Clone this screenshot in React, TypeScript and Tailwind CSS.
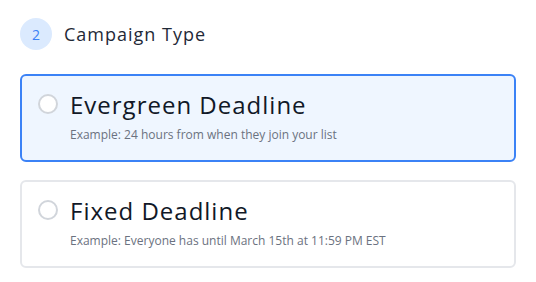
const options = [
  { title: "Evergreen Deadline", hint: "Example: 24 hours from when they join your list", active: true },
  { title: "Fixed Deadline", hint: "Example: Everyone has until March 15th at 11:59 PM EST", active: false },
];

export default function App() {
  return (
    <div className="h-[282px] w-[536px] bg-white px-5 pt-[18px] font-['Open_Sans',sans-serif]">
      <div className="flex items-center gap-3">
        <span className="flex h-8 w-8 items-center justify-center rounded-full bg-[#dbeafe] text-[14px] text-[#3b82f6]">
          2
        </span>
        <span className="text-[18px] leading-7 tracking-[1px] text-[#1f2937]">Campaign Type</span>
      </div>

      <div className="mt-6 flex flex-col gap-[18px]">
        {options.map((o) => (
          <div
            key={o.title}
            className={
              o.active
                ? "flex h-[88px] gap-3 rounded-md border-2 border-[#3b82f6] bg-[#eff6ff] px-4 pt-[13px]"
                : "flex h-[88px] gap-3 rounded-md border-2 border-[#e5e7eb] bg-white px-4 pt-[13px]"
            }
          >
            <span className="mt-[5px] h-5 w-5 shrink-0 rounded-full border-2 border-[#d1d5db] bg-white" />
            <div>
              <div className="text-[24px] leading-8 tracking-[1px] text-[#111827]">{o.title}</div>
              <div className="mt-[6px] text-[12px] leading-4 text-[#6b7280]">{o.hint}</div>
            </div>
          </div>
        ))}
      </div>
    </div>
  );
}
